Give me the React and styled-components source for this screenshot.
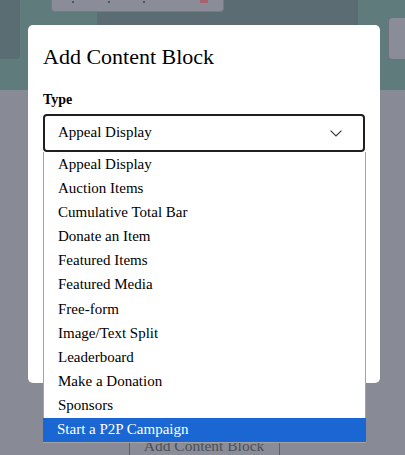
import React from "react";
import styled, { createGlobalStyle } from "styled-components";

const GlobalStyle = createGlobalStyle`
  html, body { margin: 0; padding: 0; }
  body {
    background: #888b95;
    font-family: "Liberation Serif", "Times New Roman", serif;
    color: #000;
  }
`;

const Page = styled.div`
  position: relative;
  width: 405px;
  height: 455px;
  overflow: hidden;
  background: #888b95;
`;

const Header = styled.header`
  position: relative;
  display: flex;
  align-items: flex-start;
  height: 90px;
  background: #5f7b7b;
`;

const SideCard = styled.div`
  flex: none;
  width: 20px;
  height: 59px;
  background: #5a6d72;
  border-bottom-right-radius: 4px;
`;

const CenterPanel = styled.div`
  flex: none;
  margin-left: 77px;
  width: 261px;
  height: 90px;
  background: #5b6c73;
`;

const EdgeButton = styled.div`
  flex: none;
  margin-left: 30px;
  margin-top: 17px;
  width: 24px;
  height: 41px;
  background: #8a8d98;
  border: 1px solid #6d717b;
  border-radius: 4px;
`;

const TopCard = styled.div`
  position: absolute;
  left: 51px;
  top: 0;
  width: 173px;
  height: 12px;
  display: flex;
  align-items: flex-end;
  padding-left: 20px;
  box-sizing: border-box;
  background: #8a8d98;
  border: 1px solid #767a85;
  border-top: none;
  border-radius: 0 0 4px 4px;
`;

const Mark = styled.span`
  display: block;
  width: ${(p) => p.$w || 2}px;
  height: ${(p) => p.$h || 2}px;
  margin-left: ${(p) => p.$ml}px;
  margin-bottom: ${(p) => p.$mb || 8}px;
  background: ${(p) => p.$c || "#4f5660"};
`;

const Content = styled.main`
  display: flex;
  justify-content: center;
  padding-top: 341px;
  padding-left: 3px;
`;

const BgButton = styled.div`
  box-sizing: border-box;
  width: 151px;
  height: 30px;
  border: 1px solid #5d6067;
  border-radius: 3px;
  background: #8a8d97;
  color: #4b4f57;
  font-size: 15.5px;
  line-height: 28px;
  text-align: center;
`;

const Modal = styled.section`
  position: absolute;
  left: 28px;
  top: 25px;
  width: 352px;
  height: 358px;
  box-sizing: border-box;
  padding: 19px 15px;
  background: #fff;
  border-radius: 5px;
`;

const Title = styled.h2`
  margin: 0;
  font-size: 22px;
  font-weight: normal;
  line-height: 26.4px;
`;

const Label = styled.div`
  margin-top: 20.4px;
  font-size: 14px;
  font-weight: bold;
  line-height: 17px;
`;

const SelectWrap = styled.div`
  position: relative;
  margin-top: 6.2px;
  width: 322px;
`;

const SelectBox = styled.div`
  box-sizing: border-box;
  height: 38px;
  display: flex;
  align-items: center;
  justify-content: space-between;
  padding: 0 21px 0 13px;
  border: 2px solid #1f1f1f;
  border-radius: 4px;
  font-size: 15px;
`;

const Chevron = styled.svg`
  display: block;
  margin-top: 1px;
`;

const List = styled.ul`
  position: absolute;
  left: 0;
  top: 38px;
  width: 323px;
  margin: 0;
  padding: 0;
  list-style: none;
  box-sizing: border-box;
  background: #fff;
  border: 1px solid #a3a3a3;
  border-top: none;
`;

const Option = styled.li`
  height: 24.1667px;
  display: flex;
  align-items: center;
  padding-left: 14px;
  margin: 0 ${(p) => (p.$active ? "-1px" : "0")};
  font-size: 15px;
  color: ${(p) => (p.$active ? "#fff" : "#000")};
  background: ${(p) => (p.$active ? "#1a67d3" : "transparent")};
  white-space: nowrap;
`;

const options = [
  "Appeal Display",
  "Auction Items",
  "Cumulative Total Bar",
  "Donate an Item",
  "Featured Items",
  "Featured Media",
  "Free-form",
  "Image/Text Split",
  "Leaderboard",
  "Make a Donation",
  "Sponsors",
  "Start a P2P Campaign",
];

export default function App() {
  return (
    <>
      <GlobalStyle />
      <Page>
        <Header>
          <SideCard />
          <CenterPanel />
          <EdgeButton />
          <TopCard>
            <Mark $ml={0} />
            <Mark $ml={34} />
            <Mark $ml={33} />
            <Mark $ml={55} $w={8} $h={3} $c="#a8626b" />
          </TopCard>
        </Header>
        <Content>
          <BgButton>Add Content Block</BgButton>
        </Content>
        <Modal>
          <Title>Add Content Block</Title>
          <Label>Type</Label>
          <SelectWrap>
            <SelectBox>
              <span>Appeal Display</span>
              <Chevron width="12" height="7" viewBox="0 0 12 7">
                <polyline
                  points="0.6,0.6 6,6 11.4,0.6"
                  fill="none"
                  stroke="#333"
                  strokeWidth="1.1"
                />
              </Chevron>
            </SelectBox>
            <List>
              {options.map((o, i) => (
                <Option key={o} $active={i === options.length - 1}>
                  {o}
                </Option>
              ))}
            </List>
          </SelectWrap>
        </Modal>
      </Page>
    </>
  );
}
